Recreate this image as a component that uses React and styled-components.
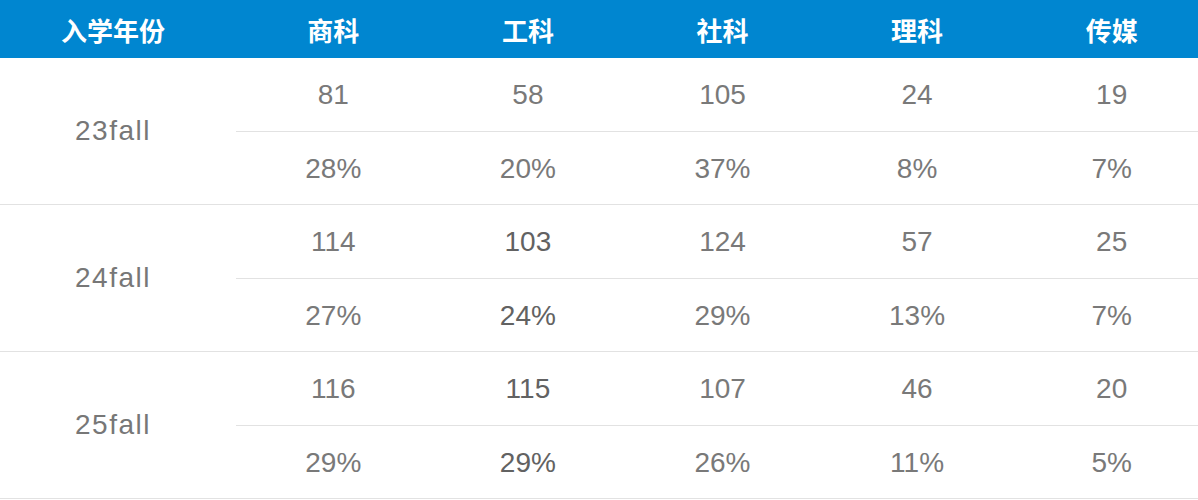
import React from "react";
import styled, { createGlobalStyle } from "styled-components";

const columns = ["商科", "工科", "社科", "理科", "传媒"];

const rows = [
  {
    year: "23fall",
    counts: ["81", "58", "105", "24", "19"],
    shares: ["28%", "20%", "37%", "8%", "7%"],
    dark: []
  },
  {
    year: "24fall",
    counts: ["114", "103", "124", "57", "25"],
    shares: ["27%", "24%", "29%", "13%", "7%"],
    dark: [1]
  },
  {
    year: "25fall",
    counts: ["116", "115", "107", "46", "20"],
    shares: ["29%", "29%", "26%", "11%", "5%"],
    dark: [1]
  }
];

const App = () => {
  return (
    <Table>
      <GlobalStyle />
      <Header>
        <HeadCell $first>入学年份</HeadCell>
        {columns.map((c) => (
          <HeadCell key={c}>{c}</HeadCell>
        ))}
      </Header>

      {rows.map((row) => (
        <Group key={row.year}>
          <YearCell>{row.year}</YearCell>
          {row.counts.map((v, i) => (
            <ValueCell key={"c" + i} $top $dark={row.dark.includes(i)}>
              {v}
            </ValueCell>
          ))}
          {row.shares.map((v, i) => (
            <ValueCell key={"s" + i} $dark={row.dark.includes(i)}>
              {v}
            </ValueCell>
          ))}
        </Group>
      ))}
    </Table>
  );
};

const GlobalStyle = createGlobalStyle`
  html, body {
    margin: 0;
    padding: 0;
    background: #ffffff;
    overflow: hidden;
  }
  body {
    font-family: "Liberation Sans", "Noto Sans CJK SC", sans-serif;
  }
`;

const COLS = "236px repeat(5, 194.6px)";

const Table = styled.div`
  width: 1209px;
`;

const Header = styled.div`
  display: grid;
  grid-template-columns: ${COLS};
  height: 58px;
  background: #0086d0;
`;

const HeadCell = styled.div`
  display: flex;
  align-items: center;
  justify-content: center;
  padding-right: ${(p) => (p.$first ? "10px" : "0")};
  color: #ffffff;
  font-family: "Noto Sans CJK SC", sans-serif;
  font-weight: 700;
  font-size: 26px;
`;

const Group = styled.div`
  display: grid;
  grid-template-columns: ${COLS};
  grid-template-rows: 74px 72px;
  border-bottom: 1px solid #e2e2e2;
`;

const YearCell = styled.div`
  grid-row: 1 / span 2;
  grid-column: 1;
  display: flex;
  align-items: center;
  justify-content: center;
  padding-right: 10px;
  color: #777777;
  font-size: 28px;
  letter-spacing: 1.5px;
`;

const ValueCell = styled.div`
  display: flex;
  align-items: center;
  justify-content: center;
  color: ${(p) => (p.$dark ? "#626262" : "#797979")};
  font-size: 28px;
  padding-top: ${(p) => (p.$top ? "0" : "1px")};
  border-bottom: ${(p) => (p.$top ? "1px solid #e2e2e2" : "none")};
`;

export default App;
